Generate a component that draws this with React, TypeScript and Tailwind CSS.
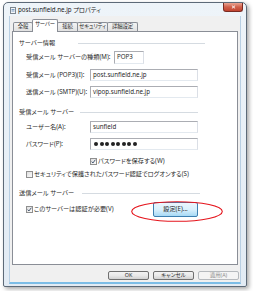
import React from "react";

const jp =
  "font-['Noto_Sans','Noto_Sans_CJK_JP',sans-serif] [font-feature-settings:'palt']";

const tab =
  "-ml-px flex h-[9px] items-center justify-center whitespace-nowrap rounded-t-[2px] border border-b-0 border-[#8a8e96] bg-gradient-to-b from-[#f4f4f4] to-[#e1e1e1] text-[5.4px] tracking-[-0.2px]";

function Check({ on }: { on?: boolean }) {
  return (
    <span className="flex h-[7px] w-[7px] shrink-0 items-center justify-center border border-[#8f8f8f] bg-gradient-to-br from-[#dedede] to-[#fbfbfb]">
      {on && (
        <svg viewBox="0 0 6 6" className="h-[5px] w-[5px]">
          <path d="M0.8 3.1l1.5 1.7L5.2 0.9" fill="none" stroke="#3c4f6b" strokeWidth="1.1" />
        </svg>
      )}
    </span>
  );
}

function Field({ value, children }: { value?: string; children?: React.ReactNode }) {
  return (
    <div className="flex h-[12px] w-[108px] items-center border border-[#abadb3] border-r-[#dbdfe6] border-b-[#e3e9ef] bg-white pl-[2px]">
      {children ?? value}
    </div>
  );
}

function Btn({ label, off }: { label: string; off?: boolean }) {
  return (
    <div
      className={
        off
          ? "flex h-[9px] w-[41px] items-center justify-center rounded-[2px] border border-[#b5b9bd] bg-[#f4f4f4] text-[5.4px] text-[#8d8d8d]"
          : "flex h-[9px] w-[41px] items-center justify-center rounded-[2px] border border-[#707070] bg-gradient-to-b from-[#f3f3f3] via-[#e9e9e9] to-[#d2d2d2] text-[5.4px]"
      }
    >
      {label}
    </div>
  );
}

export default function App() {
  return (
    <div className={`h-[291px] w-[253px] bg-white pl-[3px] pt-[2px] text-[6.2px] leading-none text-[#2a2a2a] ${jp}`}>
      <div className="flex w-[244px] flex-col rounded-t-[5px] rounded-b-[2px] border border-[#5d6a78] bg-gradient-to-b from-[#eef4f9] to-[#e2ebf4] px-[5px] pb-[2px] shadow-[2px_2px_4px_rgba(0,0,0,0.35)]">
        {/* title bar */}
        <div className="flex h-[13px] items-start">
          <div className="ml-[1px] mt-[4px] flex items-center gap-[2px]">
            <svg viewBox="0 0 6 7" className="h-[7px] w-[6px]">
              <rect x="0.5" y="0.5" width="5" height="6" fill="#f4f6f8" stroke="#7d8790" />
              <path d="M1.5 2.5h3M1.5 4h3" stroke="#5b86b3" strokeWidth="0.8" />
            </svg>
            <span className="text-[#222]">post.sunfield.ne.jp プロパティ</span>
          </div>
          <div className="ml-auto mr-[-2px] flex h-[9px] w-[20px] items-center justify-center rounded-b-[3px] border border-t-0 border-[#7a2b22] bg-gradient-to-b from-[#e9a392] via-[#d0604b] to-[#c2432f]">
            <svg viewBox="0 0 6 5" className="h-[4px] w-[5px]">
              <path d="M1 0.8l4 3.4M5 0.8l-4 3.4" stroke="#fff" strokeWidth="1.1" />
            </svg>
          </div>
        </div>

        {/* client */}
        <div className="flex flex-col border-x border-b-2 border-x-[#b8cfe3] border-b-[#7cbde6] bg-[#f0f0f0] pb-[2px] pt-[3px]">
          {/* tabs */}
          <div className="ml-[4px] flex h-[12px] items-end">
            <div className={`${tab} w-[20px]`}>全般</div>
            <div className="relative z-10 -mb-px -ml-px flex h-[13px] w-[26px] items-center justify-center whitespace-nowrap rounded-t-[2px] border border-b-0 border-[#8a8e96] bg-white pb-[2px] text-[5.4px] tracking-[-0.2px]">
              サーバー
            </div>
            <div className={`${tab} w-[21px]`}>接続</div>
            <div className={`${tab} w-[31px]`}>セキュリティ</div>
            <div className={`${tab} w-[31px]`}>詳細設定</div>
          </div>

          {/* panel */}
          <div className="ml-[2px] flex h-[234px] w-[226px] flex-col border border-[#8a8e96] bg-white">
            <div className="mt-[6px] flex h-[10px] items-center pl-[6px]">
              <span className="w-[59px]">サーバー情報</span>
              <span className="h-px w-[127px] bg-[#d5dbe1]" />
            </div>

            <div className="mt-[3px] flex h-[13px] items-center pl-[13px]">
              <span className="w-[88px]">受信メール サーバーの種類(M):</span>
              <div className="flex h-[13px] w-[30px] items-center border border-[#abadb3] border-r-[#dbdfe6] border-b-[#e3e9ef] bg-white pl-[2px]">
                POP3
              </div>
            </div>

            <div className="mt-[5px] flex h-[12px] items-center pl-[13px]">
              <span className="w-[64px]">受信メール (POP3)(I):</span>
              <Field value="post.sunfield.ne.jp" />
            </div>

            <div className="mt-[5px] flex h-[12px] items-center pl-[13px]">
              <span className="w-[64px]">送信メール (SMTP)(U):</span>
              <Field value="vipop.sunfield.ne.jp" />
            </div>

            <div className="mt-[9px] flex h-[10px] items-center pl-[6px]">
              <span className="w-[61px]">受信メール サーバー</span>
              <span className="h-px w-[118px] bg-[#d5dbe1]" />
            </div>

            <div className="mt-[4px] flex h-[12px] items-center pl-[13px]">
              <span className="w-[64px]">ユーザー名(A):</span>
              <Field value="sunfield" />
            </div>

            <div className="mt-[5px] flex h-[12px] items-center pl-[13px]">
              <span className="w-[64px]">パスワード(P):</span>
              <Field>
                <div className="flex gap-[1.5px] pl-[1px]">
                  {Array.from({ length: 8 }).map((_, i) => (
                    <span key={i} className="h-[4px] w-[4px] rounded-full bg-[#222]" />
                  ))}
                </div>
              </Field>
            </div>

            <div className="mt-[6px] flex h-[10px] items-center gap-[1px] pl-[77px]">
              <Check on />
              <span>パスワードを保存する(W)</span>
            </div>

            <div className="mt-[3px] flex h-[10px] items-center gap-[1px] pl-[13px]">
              <Check />
              <span>セキュリティで保護されたパスワード認証でログオンする(S)</span>
            </div>

            <div className="mt-[9px] flex h-[10px] items-center pl-[6px]">
              <span className="w-[63px]">送信メール サーバー</span>
              <span className="h-px w-[118px] bg-[#d5dbe1]" />
            </div>

            <div className="relative mt-[4px] flex h-[15px] items-center pl-[13px]">
              <div className="flex w-[127px] items-center gap-[1px]">
                <Check on />
                <span>このサーバーは認証が必要(V)</span>
              </div>
              <div className="flex h-[15px] w-[45px] items-center justify-center rounded-[2px] border border-[#3c7fb1] bg-gradient-to-b from-[#eaf6fd] via-[#d9f0fc] to-[#a7d9f5]">
                設定(E)...
              </div>
              <svg viewBox="0 0 92 21" className="absolute left-[118px] top-[-1px] h-[21px] w-[92px]">
                <ellipse cx="46" cy="10.5" rx="45.3" ry="9.8" fill="none" stroke="#e5141c" strokeWidth="1.1" />
              </svg>
            </div>
          </div>

          {/* dialog buttons */}
          <div className="mt-[6px] flex justify-end gap-[4px] pr-[1px]">
            <Btn label="OK" />
            <Btn label="キャンセル" />
            <Btn label="適用(A)" off />
          </div>
        </div>
      </div>
    </div>
  );
}
